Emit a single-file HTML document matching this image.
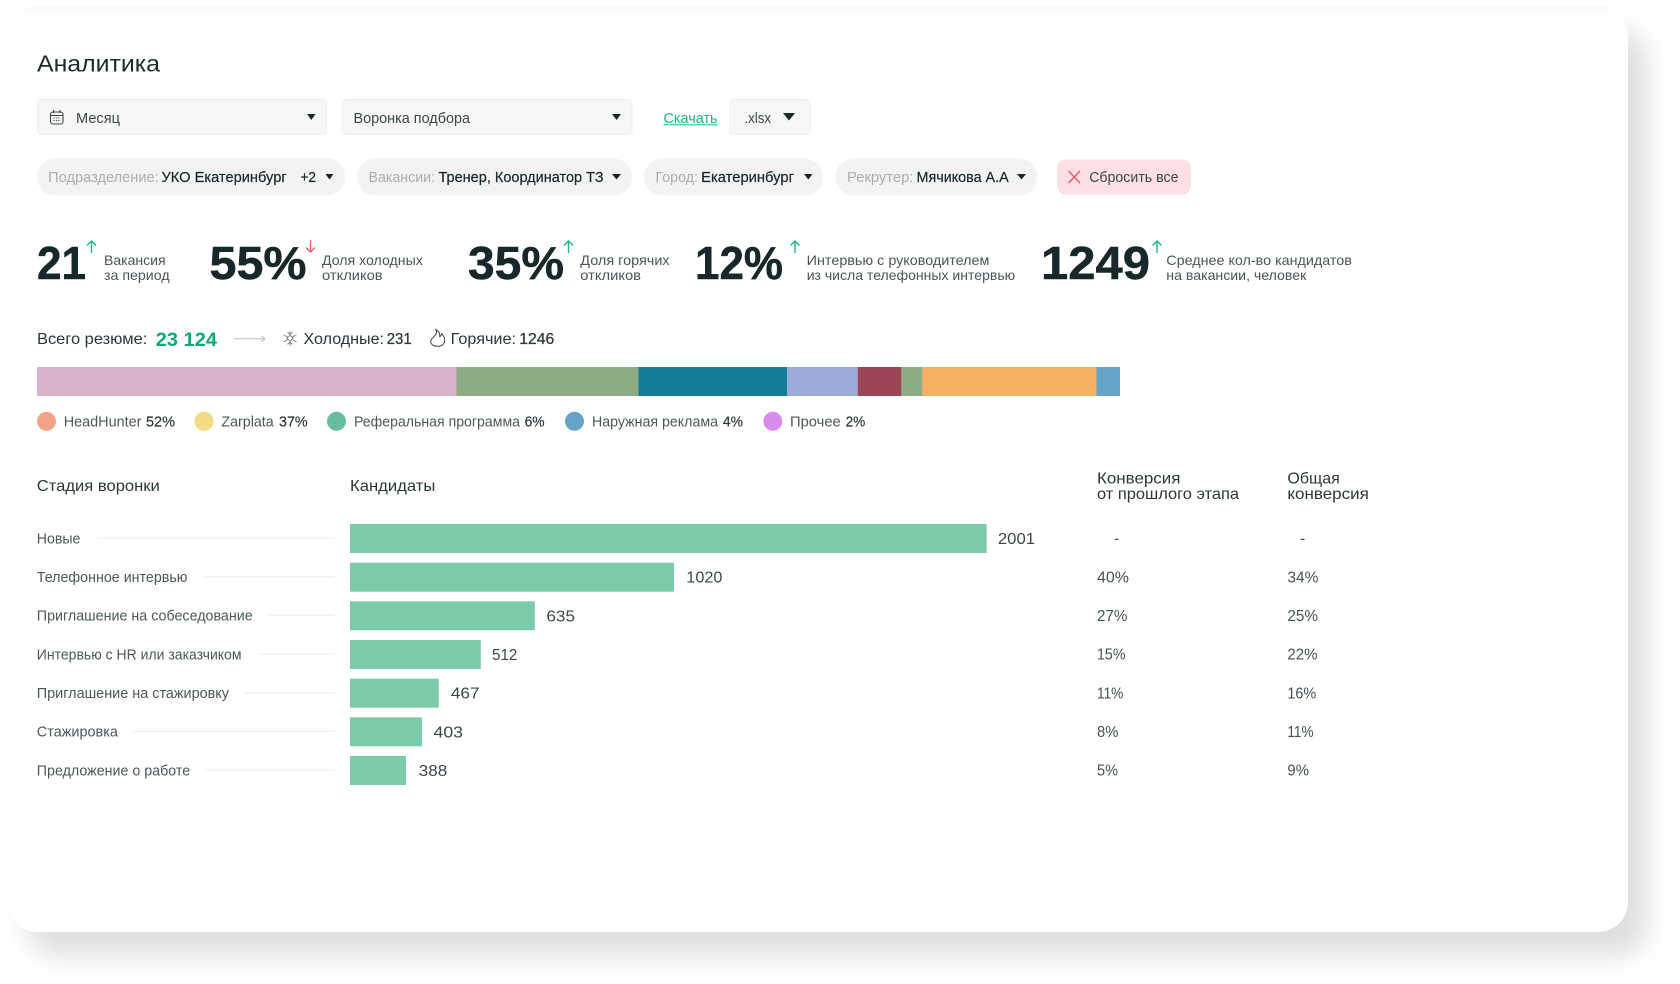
<!DOCTYPE html>
<html lang="ru"><head><meta charset="utf-8"><title>Аналитика</title>
<style>
html,body{margin:0;padding:0;background:#fff;width:1680px;height:984px;overflow:hidden}
.card{position:absolute;left:8px;top:6px;width:1620px;height:926px;border-radius:30px;background:#fff;box-shadow:19px 24px 26px rgba(0,0,0,.13);overflow:hidden}
.card:before{content:"";position:absolute;left:0;right:0;top:0;height:10px;background:linear-gradient(#f9f9f9,#fff)}
svg{position:absolute;left:0;top:0;filter:blur(.3px)}
text{font-family:"Liberation Sans",sans-serif;font-size:14.5px;fill:#3b4648}
.h{font-size:23px;fill:#1c2a2c}
.d{fill:#17272a;stroke:#17272a;stroke-width:.2}
.g{fill:#a9aeae}
.b{font-size:46px;font-weight:700;fill:#17272a;stroke:#17272a;stroke-width:.5}
.s{font-size:14px;fill:#4a5557}
.m{font-size:16px;fill:#2b3739}
.v{font-size:16px;fill:#3a4648}
.l{font-size:14.5px;fill:#4c5759}
.p{font-size:14.5px;fill:#2b3739;stroke:#2b3739;stroke-width:.2}
.c{font-size:15.5px;fill:#454f52}
</style></head><body>
<div class="card"></div>
<svg width="1680" height="984" viewBox="0 0 1680 984" xmlns="http://www.w3.org/2000/svg">
<text class="h" x="37" y="71.5" textLength="123" lengthAdjust="spacingAndGlyphs">Аналитика</text>

<rect x="37.5" y="99.5" width="289" height="35" rx="4" fill="#f7f7f7" stroke="#eeeeee"/>
<rect x="342.5" y="99.5" width="289.5" height="35" rx="4" fill="#f7f7f7" stroke="#eeeeee"/>
<rect x="730" y="99.5" width="80" height="35" rx="4" fill="#f7f7f7" stroke="#eeeeee"/>
<g fill="none" stroke="#3b4648" stroke-width="1.1"><rect x="50.5" y="112" width="12.5" height="12" rx="2.5"/><path d="M50.5 115.5H63M53.5 110v3M60 110v3"/></g>
<path d="M53.5 118h6M53.5 120.5h6" stroke="#3b4648" stroke-width="1.1" stroke-dasharray="1.2 1.2" fill="none"/>
<text x="76" y="123" textLength="44" lengthAdjust="spacingAndGlyphs">Месяц</text>
<text x="353.500" y="123" textLength="116.500" lengthAdjust="spacingAndGlyphs">Воронка подбора</text>
<text x="663.500" y="123" textLength="54" lengthAdjust="spacingAndGlyphs" style="fill:#1fb384">Скачать</text>
<rect x="663.500" y="124.300" width="54" height="1" fill="#1fb384"/>
<text x="744.500" y="123" textLength="26.500" lengthAdjust="spacingAndGlyphs">.xlsx</text>
<path d="M307 114h8.500l-4.250 6zM612 114h9l-4.500 6zM783 113h12l-6 7.500z" fill="#17272a"/>

<g fill="#f3f3f3"><rect x="37" y="158.500" width="308" height="37" rx="18.500"/><rect x="357" y="158.500" width="275" height="37" rx="18.500"/><rect x="644" y="158.500" width="179" height="37" rx="18.500"/><rect x="835.500" y="158.500" width="202" height="37" rx="18.500"/></g>
<rect x="1057" y="159.500" width="134" height="35" rx="9" fill="#fde0e3"/>
<text class="g" x="48.200" y="182" textLength="110.500" lengthAdjust="spacingAndGlyphs">Подразделение:</text>
<text class="d" x="161.500" y="182" textLength="125.200" lengthAdjust="spacingAndGlyphs">УКО Екатеринбург</text>
<text class="d" x="300.500" y="182" textLength="15.500" lengthAdjust="spacingAndGlyphs">+2</text>
<text class="g" x="368.500" y="182" textLength="66.500" lengthAdjust="spacingAndGlyphs">Вакансии:</text>
<text class="d" x="438.500" y="182" textLength="165.100" lengthAdjust="spacingAndGlyphs">Тренер, Координатор ТЗ</text>
<text class="g" x="655.500" y="182" textLength="42.500" lengthAdjust="spacingAndGlyphs">Город:</text>
<text class="d" x="701.200" y="182" textLength="92.800" lengthAdjust="spacingAndGlyphs">Екатеринбург</text>
<text class="g" x="847" y="182" textLength="66.400" lengthAdjust="spacingAndGlyphs">Рекрутер:</text>
<text class="d" x="916.500" y="182" textLength="92.200" lengthAdjust="spacingAndGlyphs">Мячикова А.А</text>
<path d="M325.500 174h8l-4 5.500zM612 174h9l-4.500 5.500zM804 174h8.500l-4.250 5.500zM1017 174h9l-4.500 5.500z" fill="#17272a"/>
<path d="M1068.500 171l11.500 12M1080 171l-11.500 12" stroke="#f0555f" stroke-width="1.300" fill="none"/>
<text x="1089.200" y="182" textLength="89.300" lengthAdjust="spacingAndGlyphs">Сбросить все</text>

<text class="b" x="37" y="279" textLength="49" lengthAdjust="spacingAndGlyphs">21</text>
<text class="b" x="209.500" y="279" textLength="97" lengthAdjust="spacingAndGlyphs">55%</text>
<text class="b" x="468" y="279" textLength="96" lengthAdjust="spacingAndGlyphs">35%</text>
<text class="b" x="695" y="279" textLength="88" lengthAdjust="spacingAndGlyphs">12%</text>
<text class="b" x="1041" y="279" textLength="109" lengthAdjust="spacingAndGlyphs">1249</text>
<g fill="none" stroke-width="1.400" stroke="#1eb584"><path d="M91.500 253V241M87 245.500l4.500-4.500 4.500 4.500"/><path d="M568.500 253V241M564 245.500l4.500-4.500 4.500 4.500"/><path d="M795 253V241M790.500 245.500l4.500-4.500 4.500 4.500"/><path d="M1157 253V241M1152.500 245.500l4.500-4.500 4.500 4.500"/></g>
<path d="M310.500 240v12M306 247.500l4.500 4.500 4.500-4.500" fill="none" stroke="#f0606a" stroke-width="1.400"/>
<text class="s" x="104" y="265" textLength="61.600" lengthAdjust="spacingAndGlyphs">Вакансия</text>
<text class="s" x="104" y="280" textLength="65.600" lengthAdjust="spacingAndGlyphs">за период</text>
<text class="s" x="322" y="265" textLength="100.800" lengthAdjust="spacingAndGlyphs">Доля холодных</text>
<text class="s" x="322" y="280" textLength="60.600" lengthAdjust="spacingAndGlyphs">откликов</text>
<text class="s" x="580.300" y="265" textLength="89.300" lengthAdjust="spacingAndGlyphs">Доля горячих</text>
<text class="s" x="580.300" y="280" textLength="60.700" lengthAdjust="spacingAndGlyphs">откликов</text>
<text class="s" x="806.700" y="265" textLength="182.700" lengthAdjust="spacingAndGlyphs">Интервью с руководителем</text>
<text class="s" x="806.700" y="280" textLength="208.500" lengthAdjust="spacingAndGlyphs">из числа телефонных интервью</text>
<text class="s" x="1166.300" y="265" textLength="185.600" lengthAdjust="spacingAndGlyphs">Среднее кол-во кандидатов</text>
<text class="s" x="1166.300" y="280" textLength="140" lengthAdjust="spacingAndGlyphs">на вакансии, человек</text>

<text class="m" x="37" y="344" textLength="110.300" lengthAdjust="spacingAndGlyphs">Всего резюме:</text>
<text x="155.800" y="346" textLength="61.200" lengthAdjust="spacingAndGlyphs" style="font-size:19px;font-weight:700;fill:#10a874">23 124</text>
<path d="M234 338.700h31M261.500 336l3.500 2.700-3.500 2.700" fill="none" stroke="#bdbdbd" stroke-width="1"/>
<g fill="none" stroke="#6a7476" stroke-width=".8"><path d="M290 331v4.800M290 340.800v4.800M283.500 334.700l4.300 2.400M292.200 339.500l4.300 2.400M296.500 334.700l-4.300 2.400M287.800 339.500l-4.300 2.400"/><path d="M287.500 332.300l2.500 2 2.500-2M287.500 344.300l2.500-2 2.500 2"/><rect x="287.800" y="336.100" width="4.400" height="4.400" transform="rotate(45 290 338.300)"/></g>
<path d="M436 329.500c1.500 3 .2 4.700-1.500 6.500-2 2-3.800 3.500-3.800 5.500 0 3 3 4.800 7 4.800s7-2.300 7-5.800c0-3-1.300-5-3-6.800-.3 1.500-.8 2.500-2 3 .5-3-1-5.700-3.700-7.200z" fill="none" stroke="#3b4648" stroke-width="1"/>
<text class="m" x="303.500" y="344" textLength="80.500" lengthAdjust="spacingAndGlyphs">Холодные:</text>
<text class="m" x="386.700" y="344" textLength="25" lengthAdjust="spacingAndGlyphs" style="stroke:#2b3739;stroke-width:.25">231</text>
<text class="m" x="450.700" y="344" textLength="65.300" lengthAdjust="spacingAndGlyphs">Горячие:</text>
<text class="m" x="519.300" y="344" textLength="35" lengthAdjust="spacingAndGlyphs" style="stroke:#2b3739;stroke-width:.25">1246</text>

<rect x="37" y="367" width="419.500" height="29" fill="#d9b0c9"/>
<rect x="456.500" y="367" width="182" height="29" fill="#8dab85"/>
<rect x="638.500" y="367" width="148.500" height="29" fill="#137d98"/>
<rect x="787" y="367" width="70.700" height="29" fill="#9dabdb"/>
<rect x="857.700" y="367" width="43.700" height="29" fill="#9b4556"/>
<rect x="901.400" y="367" width="21" height="29" fill="#8dab85"/>
<rect x="922.400" y="367" width="174.100" height="29" fill="#f5b163"/>
<rect x="1096.500" y="367" width="23.500" height="29" fill="#66a3c9"/>

<circle cx="46.500" cy="421.300" r="9.500" fill="#f4a388"/>
<circle cx="204" cy="421.300" r="9.500" fill="#f3da84"/>
<circle cx="336.500" cy="421.300" r="9.500" fill="#66bd9f"/>
<circle cx="574.500" cy="421.300" r="9.500" fill="#66a3c9"/>
<circle cx="772.800" cy="421.300" r="9.500" fill="#d98cf0"/>
<text class="l" x="63.700" y="426.500" textLength="77.800" lengthAdjust="spacingAndGlyphs">HeadHunter</text>
<text class="p" x="146" y="426.500" textLength="29" lengthAdjust="spacingAndGlyphs">52%</text>
<text class="l" x="221.400" y="426.500" textLength="52.300" lengthAdjust="spacingAndGlyphs">Zarplata</text>
<text class="p" x="279" y="426.500" textLength="28.600" lengthAdjust="spacingAndGlyphs">37%</text>
<text class="l" x="354" y="426.500" textLength="166" lengthAdjust="spacingAndGlyphs">Реферальная программа</text>
<text class="p" x="524.600" y="426.500" textLength="20" lengthAdjust="spacingAndGlyphs">6%</text>
<text class="l" x="592" y="426.500" textLength="126" lengthAdjust="spacingAndGlyphs">Наружная реклама</text>
<text class="p" x="722.900" y="426.500" textLength="20.100" lengthAdjust="spacingAndGlyphs">4%</text>
<text class="l" x="790" y="426.500" textLength="50.700" lengthAdjust="spacingAndGlyphs">Прочее</text>
<text class="p" x="845.600" y="426.500" textLength="19.700" lengthAdjust="spacingAndGlyphs">2%</text>

<text class="m" x="36.800" y="491" textLength="123" lengthAdjust="spacingAndGlyphs">Стадия воронки</text>
<text class="m" x="350" y="491" textLength="85.400" lengthAdjust="spacingAndGlyphs">Кандидаты</text>
<text class="m" x="1097" y="483.300" textLength="83.400" lengthAdjust="spacingAndGlyphs">Конверсия</text>
<text class="m" x="1097" y="499" textLength="142" lengthAdjust="spacingAndGlyphs">от прошлого этапа</text>
<text class="m" x="1287.400" y="483.300" textLength="52.400" lengthAdjust="spacingAndGlyphs">Общая</text>
<text class="m" x="1287.400" y="499" textLength="81.400" lengthAdjust="spacingAndGlyphs">конверсия</text>

<g fill="#7bcba9">
<rect x="350" y="524" width="636.700" height="29"/>
<rect x="350" y="562.700" width="324" height="29"/>
<rect x="350" y="601.300" width="184.800" height="29"/>
<rect x="350" y="640" width="130.800" height="29"/>
<rect x="350" y="678.700" width="88.800" height="29"/>
<rect x="350" y="717.300" width="71.900" height="29"/>
<rect x="350" y="756" width="56" height="29"/>
</g>
<g fill="#f1f1f1">
<rect x="97" y="537.300" width="237.500" height="1.500"/>
<rect x="204" y="576" width="130.500" height="1.500"/>
<rect x="269.200" y="614.600" width="65.300" height="1.500"/>
<rect x="258" y="653.300" width="76.500" height="1.500"/>
<rect x="245" y="692" width="89.500" height="1.500"/>
<rect x="133.500" y="730.600" width="201" height="1.500"/>
<rect x="205.800" y="769.300" width="128.700" height="1.500"/>
</g>
<text class="l" x="36.800" y="543.300" textLength="43.600" lengthAdjust="spacingAndGlyphs">Новые</text>
<text class="l" x="36.800" y="582" textLength="150.700" lengthAdjust="spacingAndGlyphs">Телефонное интервью</text>
<text class="l" x="36.800" y="620.600" textLength="215.900" lengthAdjust="spacingAndGlyphs">Приглашение на собеседование</text>
<text class="l" x="36.800" y="659.300" textLength="204.700" lengthAdjust="spacingAndGlyphs">Интервью с HR или заказчиком</text>
<text class="l" x="36.800" y="698" textLength="192.200" lengthAdjust="spacingAndGlyphs">Приглашение на стажировку</text>
<text class="l" x="36.800" y="736.600" textLength="81.100" lengthAdjust="spacingAndGlyphs">Стажировка</text>
<text class="l" x="36.800" y="775.300" textLength="153.400" lengthAdjust="spacingAndGlyphs">Предложение о работе</text>

<text class="v" x="997.900" y="544" textLength="37.100" lengthAdjust="spacingAndGlyphs">2001</text>
<text class="v" x="686.300" y="582.700" textLength="36.100" lengthAdjust="spacingAndGlyphs">1020</text>
<text class="v" x="546.400" y="621.300" textLength="28.600" lengthAdjust="spacingAndGlyphs">635</text>
<text class="v" x="492" y="660" textLength="25.400" lengthAdjust="spacingAndGlyphs">512</text>
<text class="v" x="450.900" y="698.700" textLength="28.600" lengthAdjust="spacingAndGlyphs">467</text>
<text class="v" x="433.500" y="737.300" textLength="29.500" lengthAdjust="spacingAndGlyphs">403</text>
<text class="v" x="418.800" y="776" textLength="28.500" lengthAdjust="spacingAndGlyphs">388</text>

<text class="c" x="1114" y="543.500">-</text>
<text class="c" x="1300" y="543.500">-</text>
<text class="c" x="1097" y="582.300" textLength="32" lengthAdjust="spacingAndGlyphs">40%</text>
<text class="c" x="1097" y="620.900" textLength="30.300" lengthAdjust="spacingAndGlyphs">27%</text>
<text class="c" x="1097" y="659.600" textLength="28.500" lengthAdjust="spacingAndGlyphs">15%</text>
<text class="c" x="1097" y="698.300" textLength="26.300" lengthAdjust="spacingAndGlyphs">11%</text>
<text class="c" x="1097" y="736.900" textLength="21.400" lengthAdjust="spacingAndGlyphs">8%</text>
<text class="c" x="1097" y="775.600" textLength="21" lengthAdjust="spacingAndGlyphs">5%</text>
<text class="c" x="1287.400" y="582.300" textLength="31" lengthAdjust="spacingAndGlyphs">34%</text>
<text class="c" x="1287.400" y="620.900" textLength="30.600" lengthAdjust="spacingAndGlyphs">25%</text>
<text class="c" x="1287.400" y="659.600" textLength="30.100" lengthAdjust="spacingAndGlyphs">22%</text>
<text class="c" x="1287.400" y="698.300" textLength="28.800" lengthAdjust="spacingAndGlyphs">16%</text>
<text class="c" x="1287.400" y="736.900" textLength="26.100" lengthAdjust="spacingAndGlyphs">11%</text>
<text class="c" x="1287.400" y="775.600" textLength="21.600" lengthAdjust="spacingAndGlyphs">9%</text>
</svg>
</body></html>
